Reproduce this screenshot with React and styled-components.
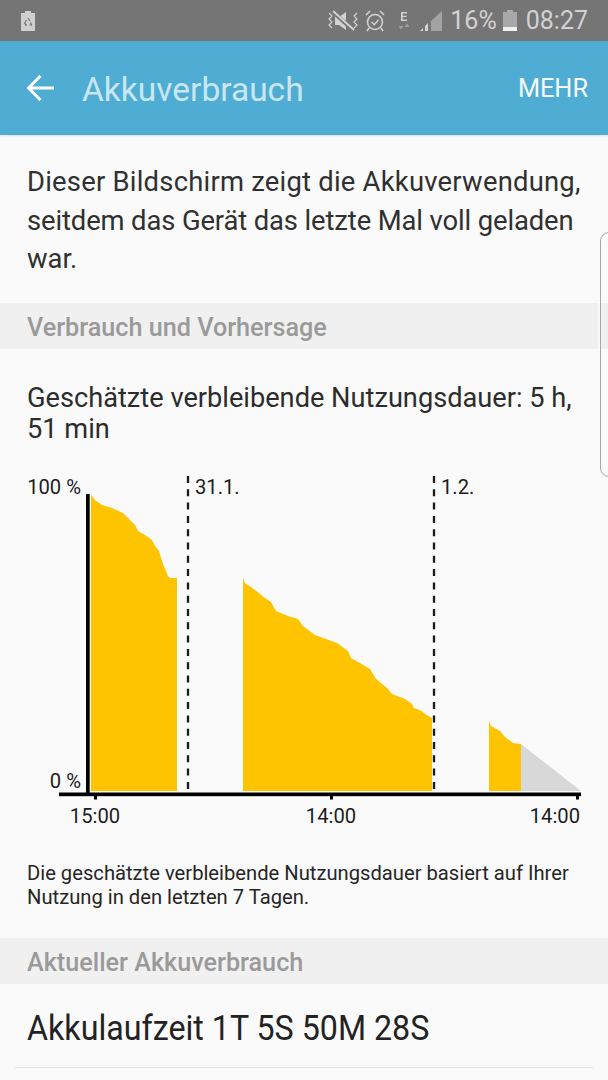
import React from "react";
import styled, { createGlobalStyle } from "styled-components";

const GlobalStyle = createGlobalStyle`
  html, body {
    margin: 0;
    padding: 0;
    background: #fafafa;
  }
  body {
    font-family: Roboto, "Liberation Sans", sans-serif;
  }
`;

const Page = styled.div`
  position: relative;
  width: 608px;
  height: 1080px;
  overflow: hidden;
  background: #fafafa;
`;

const StatusBar = styled.div`
  display: flex;
  align-items: center;
  height: 41px;
  padding: 0 20px 0 21px;
  box-sizing: border-box;
  background: #757575;
  color: #d2d2d2;
`;

const StatusRight = styled.div`
  display: flex;
  align-items: center;
  margin-left: auto;
`;

const StatusText = styled.span`
  font-size: 25px;
  line-height: 41px;
  margin-left: ${(p) => p.$left}px;
`;

const StatusIcon = styled.svg`
  display: block;
  flex: none;
  margin-left: ${(p) => p.$left || 0}px;
`;

const Header = styled.header`
  display: flex;
  align-items: center;
  height: 94px;
  padding: 0 20px 0 27px;
  box-sizing: border-box;
  background: #4fadd4;
  box-shadow: 0 1px 2px rgba(0, 0, 0, 0.12);
`;

const Title = styled.h1`
  margin: 2px 0 0 28px;
  font-size: 33.5px;
  font-weight: 400;
  color: #c9e7f3;
`;

const More = styled.span`
  margin-left: auto;
  font-size: 25.3px;
  color: #f4fafd;
`;

const Intro = styled.p`
  margin: 0;
  padding: 28px 20px 24px 27px;
  font-size: 27.4px;
  line-height: 38.5px;
  color: #303030;
`;

const IntroLine = styled.span`
  display: block;
  white-space: nowrap;
  letter-spacing: ${(p) => p.$track || 0}px;
`;

const SectionBar = styled.div`
  height: 46px;
  padding-left: 27px;
  background: #f0f0f0;
  font-size: 25.2px;
  font-weight: 500;
  line-height: 50px;
  color: #9a9a9a;
`;

const Estimate = styled.p`
  margin: 0;
  padding: 34px 20px 0 27px;
  font-size: 27.2px;
  line-height: 31px;
  color: #2c2c2c;
`;

const Chart = styled.svg`
  display: block;
  margin-top: 20px;
`;

const ChartLabel = styled.text`
  font-family: Roboto, "Liberation Sans", sans-serif;
  font-size: 20.2px;
  fill: #1c1c1c;
`;

const Note = styled.p`
  margin: 0;
  padding: 26px 20px 29px 27px;
  font-size: 20.2px;
  line-height: 24px;
  color: #262626;
`;

const Uptime = styled.div`
  padding: 0 15px;
  height: 84px;
`;

const UptimeRow = styled.div`
  padding-left: 12px;
  border-bottom: 1px solid #e4e4e4;
  height: 84px;
  box-sizing: border-box;
`;

const UptimeText = styled.div`
  font-size: 35px;
  line-height: 90px;
  color: #222;
  white-space: nowrap;
  transform: scaleX(0.92);
  transform-origin: left center;
`;

const ScrollHandle = styled.div`
  position: absolute;
  top: 232px;
  right: -10px;
  width: 18px;
  height: 245px;
  box-sizing: border-box;
  border: 1px solid #a8a8a8;
  border-radius: 14px;
  box-shadow: 0 0 0 2px #fafafa;
`;

const firstCurve = [
  [91, 495], [95, 500], [102, 505], [112, 508], [123, 513], [128, 518], [135, 525],
  [138, 531], [145, 535], [152, 540], [155, 546], [159, 551], [163, 564], [166, 571],
  [168, 576], [170, 578], [177, 578], [177, 791], [91, 791],
];

const secondCurve = [
  [243, 578], [245, 583], [255, 590], [265, 598], [271, 602], [276, 611], [288, 616],
  [298, 619], [303, 626], [315, 635], [337, 643], [348, 651], [351, 658], [360, 663],
  [370, 669], [376, 679], [387, 688], [392, 694], [405, 699], [412, 704], [414, 708],
  [422, 711], [425, 714], [432, 718], [432, 791], [243, 791],
];

const thirdCurve = [
  [489, 721], [491, 726], [500, 731], [505, 737], [513, 743], [521, 744], [521, 791], [489, 791],
];

const forecast = [[521, 744], [581, 791], [521, 791]];

const toPoints = (list) => list.map(([x, y]) => `${x},${y}`).join(" ");

function BatteryChart() {
  return (
    <Chart width="608" height="370" viewBox="0 465 608 370">
      <polygon points={toPoints(firstCurve)} fill="#ffc400" />
      <polygon points={toPoints(secondCurve)} fill="#ffc400" />
      <polygon points={toPoints(thirdCurve)} fill="#ffc400" />
      <polygon points={toPoints(forecast)} fill="#d8d8d8" />
      <line x1="188" y1="476" x2="188" y2="791" stroke="#1a1a1a" strokeWidth="2.3" strokeDasharray="7 6.3" />
      <line x1="434" y1="476" x2="434" y2="791" stroke="#1a1a1a" strokeWidth="2.3" strokeDasharray="7 6.3" />
      <rect x="86" y="494" width="3.7" height="302" fill="#000" />
      <rect x="59" y="792.500" width="522" height="3.700" fill="#000" />
      <rect x="94" y="796" width="3" height="3.500" fill="#000" />
      <rect x="330" y="796" width="3" height="3.500" fill="#000" />
      <rect x="576" y="796" width="3" height="3.500" fill="#000" />
      <ChartLabel x="81" y="494" textAnchor="end">100 %</ChartLabel>
      <ChartLabel x="81" y="788" textAnchor="end">0 %</ChartLabel>
      <ChartLabel x="195" y="494">31.1.</ChartLabel>
      <ChartLabel x="441" y="494">1.2.</ChartLabel>
      <ChartLabel x="95" y="823" textAnchor="middle">15:00</ChartLabel>
      <ChartLabel x="331" y="823" textAnchor="middle">14:00</ChartLabel>
      <ChartLabel x="580" y="823" textAnchor="end">14:00</ChartLabel>
    </Chart>
  );
}

function StatusBarIcons() {
  return (
    <StatusRight>
      {/* vibrate + mute */}
      <StatusIcon width="30" height="22" viewBox="0 0 30 22">
        <path d="M1 3l3 3-3 3 3 3-3 3 3 3M29 3l-3 3 3 3-3 3 3 3-3 3" fill="none" stroke="#d2d2d2" strokeWidth="1.2" />
        <path d="M7 7h4l7-5v18l-7-5H7z" fill="#d2d2d2" />
        <path d="M5 2l20 18" stroke="#757575" strokeWidth="4" />
        <path d="M5 1l21 19" stroke="#d2d2d2" strokeWidth="2" />
      </StatusIcon>
      {/* alarm */}
      <StatusIcon $left={7} width="20" height="22" viewBox="0 0 20 22">
        <circle cx="10" cy="12" r="7.5" fill="none" stroke="#d2d2d2" strokeWidth="1.6" />
        <path d="M6.5 12l2.7 2.7 4.4-5" fill="none" stroke="#d2d2d2" strokeWidth="1.5" />
        <path d="M1 5l4-4M19 5l-4-4M4 18l-2 3M16 18l2 3" stroke="#d2d2d2" strokeWidth="1.6" />
      </StatusIcon>
      {/* data E */}
      <StatusIcon $left={13} width="12" height="20" viewBox="0 0 12 20">
        <path d="M3 1h6v1.5H4.7v2.2h3.8v1.4H4.7v2.4H9V10H3z" fill="#d2d2d2" />
        <path d="M0.500 15h5L3 18.500z" fill="#9d9d9d" />
        <path d="M6.500 16h5L9 12.500z" fill="#9d9d9d" />
      </StatusIcon>
      {/* signal */}
      <StatusIcon $left={10} width="22" height="22" viewBox="0 0 22 22">
        <path d="M0 21l3-3v3zM5 21v-5l3-3v8z" fill="#d2d2d2" />
        <path d="M11 21V11l11-10v20z" fill="#a3a3a3" />
      </StatusIcon>
      <StatusText $left={8}>16%</StatusText>
      {/* battery */}
      <StatusIcon $left={6} width="14" height="21" viewBox="0 0 14 21">
        <path d="M4 0h6v2h4v19H0V2h4z" fill="#a8a8a8" />
        <rect x="0" y="17" width="14" height="4" fill="#efefef" />
      </StatusIcon>
      <StatusText $left={9}>08:27</StatusText>
    </StatusRight>
  );
}

export default function App() {
  return (
    <>
      <GlobalStyle />
      <Page>
        <StatusBar>
          <StatusIcon width="14" height="20" viewBox="0 0 14 20">
            <path d="M4 0h6v2h4v18H0V2h4z" fill="#cfcfcf" />
            <path d="M7 7l2 3M5.500 9l-2 3.500 2 1.500M8.500 14h2l-1-2.500M4 14h2" fill="none" stroke="#6f6f6f" strokeWidth="1.100" />
          </StatusIcon>
          <StatusBarIcons />
        </StatusBar>
        <Header>
          <svg width="27" height="26" viewBox="0 0 27 26">
            <path d="M27 13H2M13.500 1L1.500 13l12 12" fill="none" stroke="#fff" strokeWidth="3" />
          </svg>
          <Title>Akkuverbrauch</Title>
          <More>MEHR</More>
        </Header>
        <Intro>
          <IntroLine $track={0.23}>Dieser Bildschirm zeigt die Akkuverwendung,</IntroLine>
          <IntroLine $track={-0.12}>seitdem das Gerät das letzte Mal voll geladen</IntroLine>
          <IntroLine>war.</IntroLine>
        </Intro>
        <SectionBar>Verbrauch und Vorhersage</SectionBar>
        <Estimate>Geschätzte verbleibende Nutzungsdauer: 5 h, 51 min</Estimate>
        <BatteryChart />
        <Note>
          Die geschätzte verbleibende Nutzungsdauer basiert auf Ihrer Nutzung in den letzten 7 Tagen.
        </Note>
        <SectionBar>Aktueller Akkuverbrauch</SectionBar>
        <Uptime>
          <UptimeRow>
            <UptimeText>Akkulaufzeit 1T 5S 50M 28S</UptimeText>
          </UptimeRow>
        </Uptime>
        <ScrollHandle />
      </Page>
    </>
  );
}
